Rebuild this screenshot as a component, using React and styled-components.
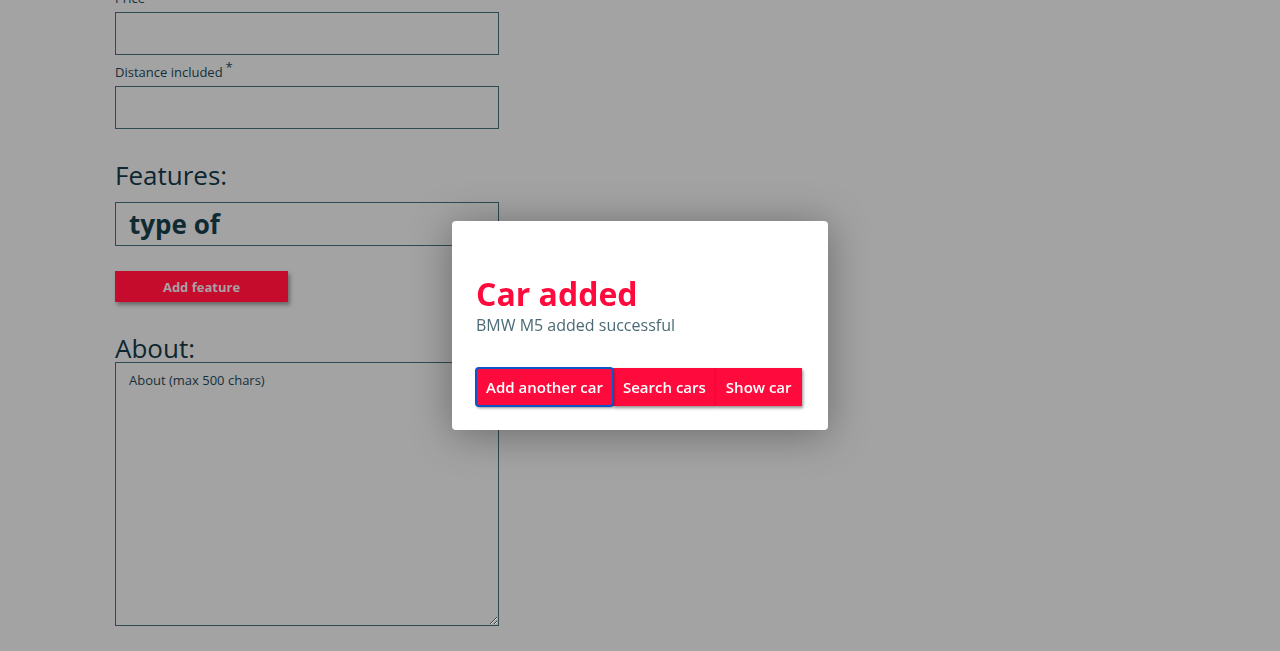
import React from "react";
import styled, { createGlobalStyle } from "styled-components";

const Global = createGlobalStyle`
  html, body { margin: 0; padding: 0; background: #a3a3a3; overflow: hidden; }
  body { font-family: "Open Sans", "Lato", sans-serif; color: #0f2a33; }
  * { box-sizing: border-box; }
`;

const Page = styled.div`
  margin-top: -10px;
  padding-left: 115px;
  width: 499px;
  display: flex;
  flex-direction: column;
`;

const Field = styled.div`
  display: flex;
  flex-direction: column;
  margin-top: ${(p) => (p.$first ? 0 : 9)}px;
`;

const Label = styled.label`
  font-size: 13px;
  line-height: 16px;
  margin-bottom: 6px;
  color: #12303a;
  sup { font-size: 13px; line-height: 0; margin-left: 3px; }
`;

const Input = styled.input`
  height: ${(p) => (p.$big ? 44 : 43)}px;
  width: 384px;
  border: 1px solid #2e4a52;
  background: transparent;
  font-family: inherit;
  font-size: ${(p) => (p.$big ? 26 : 14)}px;
  font-weight: ${(p) => (p.$big ? 700 : 400)};
  color: #0f2a33;
  padding: 0 13px;
  outline: none;
`;

const Heading = styled.h2`
  margin: ${(p) => p.$mt}px 0 ${(p) => p.$mb}px;
  font-size: 26px;
  line-height: 31px;
  font-weight: 400;
  color: #0d2630;
`;

const FeatureButton = styled.button`
  margin-top: 25px;
  width: 173px;
  height: 31px;
  border: none;
  background: #c50c2d;
  color: #a9a0a3;
  font-family: inherit;
  font-size: 13px;
  font-weight: 700;
  box-shadow: 2px 3px 4px rgba(0, 0, 0, 0.35);
`;

const TextArea = styled.textarea`
  width: 384px;
  height: 264px;
  border: 1px solid #2e4a52;
  background: transparent;
  font-family: inherit;
  font-size: 13px;
  padding: 8px 13px;
  color: #0f2a33;
  outline: none;
  &::placeholder { color: #17303a; opacity: 1; }
`;

const Backdrop = styled.div`
  position: fixed;
  inset: 0;
  display: flex;
  align-items: center;
  justify-content: center;
`;

const Modal = styled.div`
  width: 376px;
  height: 209px;
  background: #fff;
  border-radius: 4px;
  padding: 54px 24px 24px;
  box-shadow: 0 4px 40px rgba(0, 0, 0, 0.35);
  display: flex;
  flex-direction: column;
`;

const Title = styled.h1`
  margin: 0;
  font-size: 32px;
  line-height: 38px;
  font-weight: 700;
  color: #ff0a3c;
`;

const Sub = styled.p`
  margin: 2px 0 0;
  font-size: 16px;
  line-height: 20px;
  color: #4b6a75;
`;

const Actions = styled.div`
  margin-top: auto;
  display: flex;
`;

const ActionButton = styled.button`
  flex: none;
  height: 38px;
  padding: 0 10px;
  border: none;
  background: #ff0a3c;
  color: #fff;
  font-family: inherit;
  font-size: 15px;
  font-weight: 600;
  white-space: nowrap;
  box-shadow: 1px 2px 3px rgba(0, 0, 0, 0.45);
  outline: ${(p) => (p.$focus ? "2px solid #0a55c8" : "none")};
  outline-offset: -1px;
  border-radius: ${(p) => (p.$focus ? 3 : 0)}px;
  position: relative;
  z-index: ${(p) => (p.$focus ? 1 : 0)};
`;

export default function App() {
  return (
    <>
      <Global />
      <Page>
        <Field $first>
          <Label>Price</Label>
          <Input />
        </Field>
        <Field>
          <Label>
            Distance included<sup>*</sup>
          </Label>
          <Input />
        </Field>
        <Heading $mt={31} $mb={11}>Features:</Heading>
        <Input $big defaultValue="type of" />
        <div>
          <FeatureButton>Add feature</FeatureButton>
        </div>
        <Heading $mt={31} $mb={-2}>About:</Heading>
        <TextArea placeholder="About (max 500 chars)" />
      </Page>
      <Backdrop>
        <Modal>
          <Title>Car added</Title>
          <Sub>BMW M5 added successful</Sub>
          <Actions>
            <ActionButton $focus>Add another car</ActionButton>
            <ActionButton>Search cars</ActionButton>
            <ActionButton>Show car</ActionButton>
          </Actions>
        </Modal>
      </Backdrop>
    </>
  );
}
